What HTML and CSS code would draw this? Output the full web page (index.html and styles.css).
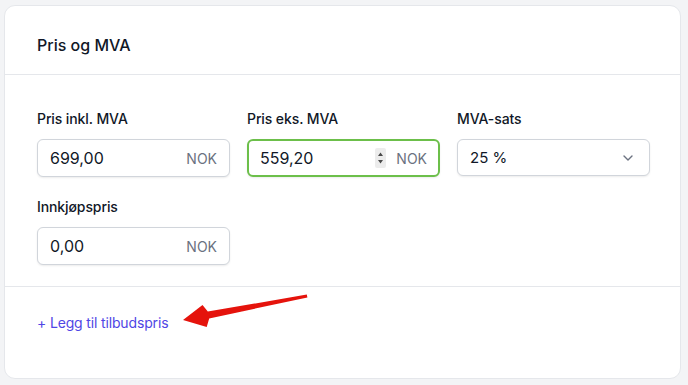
FILE: index.html
```html
<!DOCTYPE html>
<html lang="nb">
<head>
  <meta charset="UTF-8">
  <title>Pris og MVA</title>
  <meta name="viewport" content="width=device-width, initial-scale=1.0">
  <link rel="stylesheet" href="styles.css">
</head>
<body>

<section class="card">
  <header class="card-head">
    <h2>Pris og MVA</h2>
  </header>

  <div class="card-body">
    <div class="grid">
      <div class="field">
        <label>Pris inkl. MVA</label>
        <div class="control">
          <input type="text" value="699,00">
          <span class="unit">NOK</span>
        </div>
      </div>
      <div class="field">
        <label>Pris eks. MVA</label>
        <div class="control focused">
          <input type="text" value="559,20">
          <span class="spin">
            <svg width="7" height="14" viewBox="0 0 7 14"><path d="M3.5 1.5 L6 5 H1 Z M3.5 12.5 L6 9 H1 Z" fill="#4b4b4b"/></svg>
          </span>
          <span class="unit">NOK</span>
        </div>
      </div>
      <div class="field">
        <label>MVA-sats</label>
        <div class="control select">
          <span class="value">25 %</span>
          <svg width="10" height="6" viewBox="0 0 10 6"><path d="M1 1 L5 5 L9 1" fill="none" stroke="#6b7280" stroke-width="1.4" stroke-linecap="round" stroke-linejoin="round"/></svg>
        </div>
      </div>
      <div class="field">
        <label>Innkjøpspris</label>
        <div class="control">
          <input type="text" value="0,00">
          <span class="unit">NOK</span>
        </div>
      </div>
    </div>
  </div>

  <footer class="card-foot">
    <a href="#" class="add-link">+ Legg til tilbudspris</a>
  </footer>
</section>

<!-- annotation arrow drawn over the screenshot -->
<svg class="arrow" width="688" height="385" viewBox="0 0 688 385">
  <polygon points="183,320 202.5,305 207.8,311.6 306.8,294.6 307.4,297.4 209.2,318.4 206.7,327" fill="#e5130c"/>
</svg>

</body>
</html>
```

FILE: styles.css
```css
* { box-sizing: border-box; }
body {
  margin: 0; padding: 5px 7px 0 4px; background: #f3f4f6; color: #111827;
  font-family: Inter, "Noto Sans", sans-serif; height: 385px; overflow: hidden;
}
.card {
  background: #fff; border: 1px solid #e5e7eb; border-radius: 11px; height: 374px;
}
.card-head { padding: 27px 32px 0; height: 69px; border-bottom: 1px solid #e5e7eb; }
.card-head h2 { margin: 0; font-size: 16px; line-height: 24px; font-weight: 500; }

.card-body { padding: 34px 32px 0; height: 212px; border-bottom: 1px solid #e5e7eb; }
.grid { display: grid; grid-template-columns: repeat(3, 193px); column-gap: 17px; row-gap: 20px; }
.field label { display: block; font-size: 14px; line-height: 20px; font-weight: 500; margin-bottom: 10px; letter-spacing: -0.1px; }

.control {
  display: flex; align-items: center; height: 38px; padding: 0 12px;
  border: 1px solid #d1d5db; border-radius: 6px; background: #fff;
  box-shadow: 0 1px 2px rgba(0, 0, 0, 0.08);
}
.control input {
  flex: 1; min-width: 0; border: none; outline: none; background: transparent; padding: 0;
  font: inherit; font-size: 16px; color: #111827;
}
.control .unit { font-size: 14px; color: #6b7280; margin-left: 10px; }
.control.focused { border: 2px solid #6cbf4a; padding: 0 11px; }
.spin {
  display: flex; align-items: center; justify-content: center;
  width: 11px; height: 20px; background: #ececec; border-radius: 2px;
}
.control.select { height: 37px; justify-content: space-between; padding-right: 16px; }
.control.select .value { font-size: 15px; }

.card-foot { padding: 25px 32px 0; }
.add-link { font-size: 14px; line-height: 20px; color: #4f46e5; text-decoration: none; letter-spacing: -0.15px; }

.arrow { position: absolute; top: 0; left: 0; pointer-events: none; }
```
